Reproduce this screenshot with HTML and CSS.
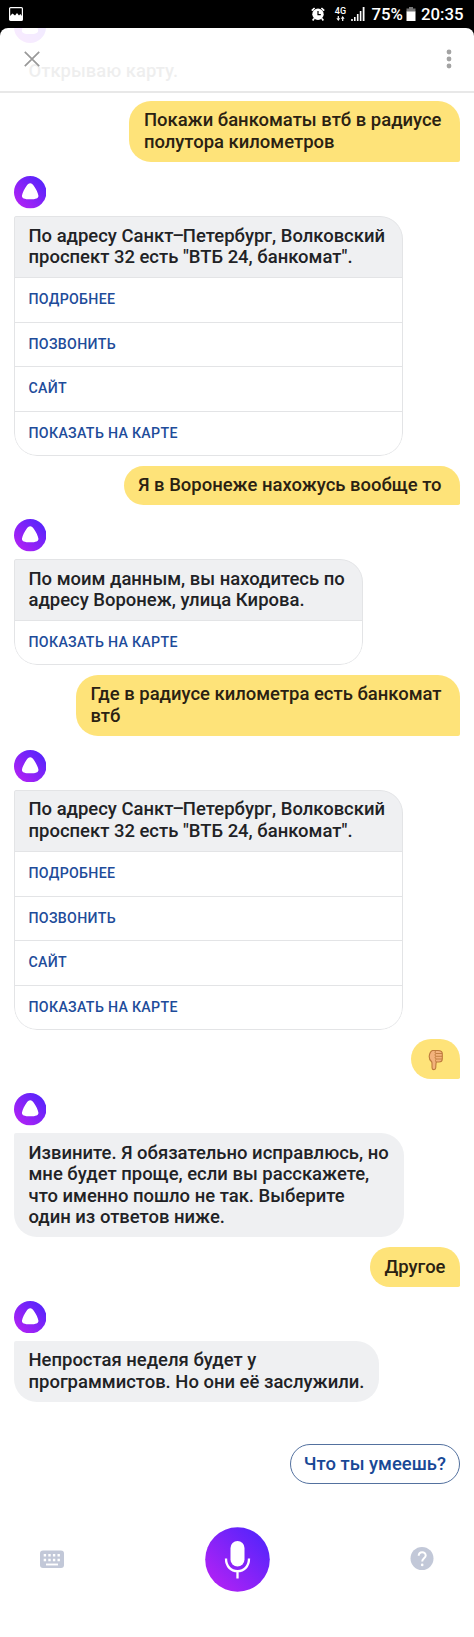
FILE: index.html
```html
<!DOCTYPE html>
<html lang="ru">
  <head>
    <meta charset="UTF-8" />
    <meta name="viewport" content="width=device-width, initial-scale=1.0" />
    <title>Алиса</title>
    <link rel="stylesheet" href="styles.css">
  </head>
  <body>
    <!-- Shared icons -->
    <svg class="sprite" width="0" height="0">
      <defs>
        <linearGradient id="violet" x1="0.15" y1="0.85" x2="0.85" y2="0.15">
          <stop offset="0" stop-color="#ac22f5" />
          <stop offset="1" stop-color="#5a24fb" />
        </linearGradient>
      </defs>
      <symbol id="alice" viewBox="0 0 32 32">
        <circle cx="16" cy="16" r="16" fill="url(#violet)" />
        <path d="M16 7.2c1.500 0 2.500 1.100 3.500 2.500 1.900 2.700 4.200 6.900 4.600 9.500.4 2.800-2.500 3.800-8.100 3.800s-8.500-1-8.100-3.800c.4-2.600 2.700-6.800 4.600-9.500 1-1.400 2-2.500 3.500-2.500z" fill="#fff" />
      </symbol>
    </svg>

    <div class="status-bar">
      <svg class="status-picture" width="14" height="14" viewBox="0 0 14 14">
        <rect x="0.6" y="0.6" width="12.8" height="12.8" rx="1" fill="none" stroke="#fff" stroke-width="1.2" />
        <path d="M1 9l2.500-2.500L6 8.500 8 6l2 2.500L11.300 7 13 9v4H1z" fill="#fff" />
      </svg>
      <div class="status-right">
        <svg width="14" height="14" viewBox="0 0 14 14">
          <circle cx="7" cy="7.3" r="5.7" fill="#fff" />
          <path d="M.8 3.600L3.600 1M13.200 3.600L10.400 1M3 11.500l-1.300 1.900M11 11.500l1.300 1.900" stroke="#fff" stroke-width="1.7" />
          <path d="M7 4v3.600h2.800" fill="none" stroke="#000" stroke-width="1.2" />
        </svg>
        <div class="network">
          <span>4G</span>
          <svg width="9" height="5" viewBox="0 0 9 5">
            <path d="M2.300 0v2.500M6.700 5V2.500" stroke="#fff" stroke-width="1.2" />
            <path d="M.4 2.300h3.800L2.300 5zM4.800 2.700h3.800L6.700 0z" fill="#fff" />
          </svg>
        </div>
        <svg class="signal" width="14" height="14" viewBox="0 0 14 14">
          <path d="M1 12v2M3.800 10v4M6.700 7v7M9.600 4v10" stroke="#fff" stroke-width="1.6" />
          <path d="M12.600 0v14" stroke="#fff" stroke-width="1.8" />
        </svg>
        <span class="percent">75%</span>
        <svg class="battery" width="10" height="14" viewBox="0 0 10 14">
          <path d="M3 0h4v1.500h2.500V5h-9V1.500H3z" fill="#777" />
          <path d="M.5 4.500h9V14h-9z" fill="#fff" />
        </svg>
        <span class="clock">20:35</span>
      </div>
    </div>

    <header class="header">
      <!-- Previous message showing through the header -->
      <svg class="faded-avatar" width="32" height="32"><use href="#alice" /></svg>
      <span class="faded-text">Открываю карту.</span>
      <svg class="close" width="16" height="16" viewBox="0 0 16 16">
        <path d="M.8.8l14.400 14.400M15.200.8L.8 15.200" stroke="#999" stroke-width="1.7" />
      </svg>
      <svg class="more" width="6" height="20" viewBox="0 0 6 20" fill="#a3a3a3">
        <circle cx="3" cy="3" r="2.4" />
        <circle cx="3" cy="10" r="2.4" />
        <circle cx="3" cy="17" r="2.4" />
      </svg>
    </header>

    <main class="chat">
      <div class="user wide">Покажи банкоматы втб в радиусе<br>полутора километров</div>

      <svg class="avatar"><use href="#alice" /></svg>
      <div class="card">
        <p class="card-text">По адресу Санкт<span class="dash">–</span>Петербург, Волковский<br>проспект 32 есть "ВТБ 24, банкомат".</p>
        <a class="action">Подробнее</a>
        <a class="action">Позвонить</a>
        <a class="action">Сайт</a>
        <a class="action">Показать на карте</a>
      </div>

      <div class="user wide">Я в Воронеже нахожусь вообще то</div>

      <svg class="avatar"><use href="#alice" /></svg>
      <div class="card">
        <p class="card-text">По моим данным, вы находитесь по<br>адресу Воронеж, улица Кирова.</p>
        <a class="action">Показать на карте</a>
      </div>

      <div class="user wide">Где в радиусе километра есть банкомат<br>втб</div>

      <svg class="avatar"><use href="#alice" /></svg>
      <div class="card">
        <p class="card-text">По адресу Санкт<span class="dash">–</span>Петербург, Волковский<br>проспект 32 есть "ВТБ 24, банкомат".</p>
        <a class="action">Подробнее</a>
        <a class="action">Позвонить</a>
        <a class="action">Сайт</a>
        <a class="action">Показать на карте</a>
      </div>

      <div class="user emoji">
        <svg width="16" height="22" viewBox="0 0 16 22">
          <path d="M4.500 1.500h5.500c3 0 4.300 1.200 4.300 3.200v5c0 2-1.500 3.300-3.500 3.300H8.300c-.5 1.500-.4 3.700-.6 6-.2 2.200-3.500 2.200-3.600 0-.2-3 .1-4.500-.3-6C2.200 11.500 1 10 1.200 7.500 1.500 4.500 2.500 2.300 4.500 1.500z" fill="#f3b27c" stroke="#bd7a3c" stroke-width="1.1" />
          <path d="M8 1.800c-1.300.5-1.300 2.300 0 2.700h6M8 4.500c-1.400.6-1.300 2.400 0 2.800h6.300M8 7.300c-1.300.6-1.200 2.400.2 2.700h5.900M8.400 10c-1.200.4-1.200 2.300-.1 3" fill="none" stroke="#bd7a3c" stroke-width="0.9" />
        </svg>
      </div>

      <svg class="avatar"><use href="#alice" /></svg>
      <div class="bot long">Извините. Я обязательно исправлюсь, но<br>мне будет проще, если вы расскажете,<br>что именно пошло не так. Выберите<br>один из ответов ниже.</div>

      <div class="user">Другое</div>

      <svg class="avatar"><use href="#alice" /></svg>
      <div class="bot">Непростая неделя будет у<br>программистов. Но они её заслужили.</div>

      <button class="suggestion">Что ты умеешь?</button>
    </main>

    <footer class="controls">
      <svg width="24" height="24" viewBox="0 0 24 24">
        <rect x="0" y="3.5" width="24" height="17.5" rx="3" fill="#c2c8d8" />
        <path d="M3.700 8.300h17M3.700 13h17" stroke="#fff" stroke-width="2.4" stroke-dasharray="2.4 2.2" />
        <path d="M6 17.500h12" stroke="#fff" stroke-width="1.9" />
      </svg>
      <svg width="65" height="65" viewBox="0 0 65 65">
        <circle cx="32.5" cy="32.5" r="32.3" fill="url(#violet)" />
        <rect x="25.5" y="14" width="14" height="25.5" rx="7" fill="#fff" />
        <path d="M21 31.500c0 8 5 12.700 11.500 12.700S44 39.500 44 31.500M32.500 44v7.500" fill="none" stroke="#fff" stroke-width="2.3" />
      </svg>
      <svg width="24" height="24" viewBox="0 0 24 24">
        <circle cx="12" cy="11.5" r="11.5" fill="#c2c8d8" />
        <path d="M8.700 8.800c0-4.800 7-4.800 7-.4 0 2.900-3.500 3-3.500 6.100" fill="none" stroke="#fff" stroke-width="2" />
        <circle cx="12.2" cy="17.9" r="1.3" fill="#fff" />
      </svg>
    </footer>
  </body>
</html>
```
FILE: styles.css
```css
body {
  font-family: Roboto, sans-serif;
  font-weight: 500;
  font-size: 18.47px;
  line-height: 21.5px;
  margin: 0;
  background-color: #000;
  color: #212225;
  height: 1637px;
  overflow: hidden;
}

svg {
  display: block;
  flex: none;
}

.sprite {
  position: absolute;
}

.status-bar {
  height: 27.5px;
  padding: 0 10.5px 0 9px;
  display: flex;
  align-items: center;
  justify-content: space-between;
  box-sizing: border-box;
  color: #fff;
}

.status-right {
  display: flex;
  align-items: center;
  height: 27px;
  padding-top: 1px;
  box-sizing: border-box;
}

.network {
  display: flex;
  flex-direction: column;
  align-items: center;
  width: 12px;
  margin-left: 9px;
  font-size: 9px;
  line-height: 8px;
  gap: 1px;
}

.signal {
  margin-left: 5px;
}

.percent {
  margin-left: 6px;
  font-size: 16.8px;
}

.battery {
  margin: 0 5px 0 3px;
}

.clock {
  font-size: 16.8px;
}

/* Header */
.header {
  position: relative;
  display: flex;
  align-items: center;
  justify-content: space-between;
  height: 65.5px;
  padding: 0 22px 0 24px;
  box-sizing: border-box;
  background: #fff;
  border-bottom: 2px solid #e8e8e8;
  border-radius: 8px 8px 0 0;
  overflow: hidden;
}

.close,
.more {
  position: relative;
}

.faded-avatar {
  position: absolute;
  left: 14px;
  top: -16.5px;
  opacity: 0.09;
}

.faded-text {
  position: absolute;
  left: 28.5px;
  top: 33px;
  opacity: 0.07;
}

/* Messages */
.chat {
  display: flex;
  flex-direction: column;
  align-items: flex-start;
  height: 1391px;
  padding: 7.8px 14px 0;
  box-sizing: border-box;
  background: #fff;
  white-space: nowrap;
}

.user {
  align-self: flex-end;
  padding: 9.7px 14.5px 8.5px;
  background: #fee379;
  color: #2a2112;
  border-radius: 22px 22px 2px 22px;
}

.user.wide {
  padding-right: 18.5px;
}

.user.emoji {
  height: 21.5px;
  padding: 9.1px 16.5px;
}

.avatar {
  width: 32.4px;
  height: 32.4px;
  margin: 14.2px 0 7.3px;
}

.card,
.bot {
  margin-bottom: 9.8px;
  border-radius: 2px 23px 23px 23px;
}

.card {
  overflow: hidden;
  position: relative;
}

/* Outline drawn over the text block and the actions */
.card::after {
  content: "";
  position: absolute;
  inset: 0;
  border: 1px solid #e3e4e6;
  border-radius: inherit;
}

.card-text {
  margin: 0;
  padding: 9.7px 18px 8.5px 14.5px;
  background: #eff0f2;
}

/* Short dash inside a city name */
.dash {
  margin: 0 -1.2px;
}

.action {
  display: block;
  height: 44.7px;
  padding-left: 14.5px;
  box-sizing: border-box;
  border-top: 1px solid #e3e4e6;
  color: #1e4c9a;
  font-size: 14.2px;
  line-height: 43px;
  letter-spacing: 0.3px;
  text-transform: uppercase;
}

.bot {
  padding: 9.7px 14.5px 8.5px;
  background: #eff0f2;
}

.bot.long {
  padding-right: 15.5px;
}

.suggestion {
  align-self: flex-end;
  height: 40px;
  margin-top: 32.5px;
  padding: 1px 13px 0;
  border: 1px solid #53719f;
  border-radius: 21px;
  background: #fff;
  color: #184896;
  font: inherit;
}

/* Bottom controls */
.controls {
  display: flex;
  align-items: center;
  justify-content: space-between;
  height: 153px;
  padding: 0 40px 3px;
  box-sizing: border-box;
  background: #fff;
}
```
